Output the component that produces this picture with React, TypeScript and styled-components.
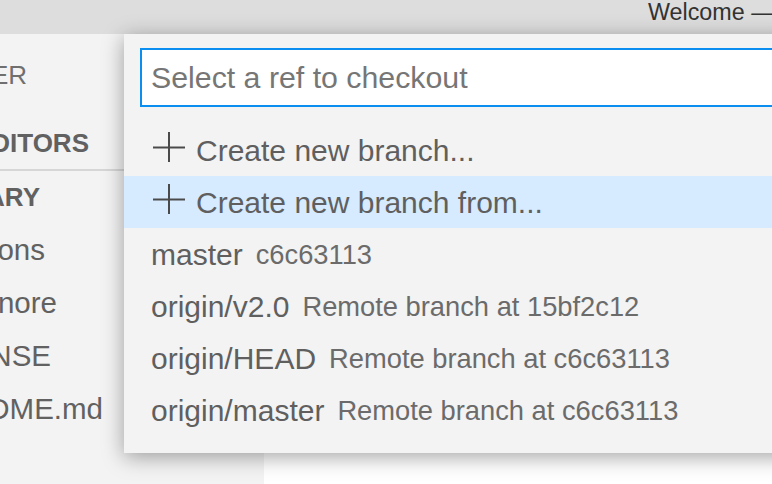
import React from "react";
import styled, { createGlobalStyle } from "styled-components";

const GlobalStyle = createGlobalStyle`
  html, body {
    margin: 0;
    padding: 0;
    width: 772px;
    height: 484px;
    overflow: hidden;
    font-family: "Liberation Sans", Arial, sans-serif;
  }
  * { box-sizing: border-box; }
`;

const Window = styled.div`
  position: relative;
  width: 772px;
  height: 484px;
  display: flex;
  flex-direction: column;
  overflow: hidden;
`;

const TitleBar = styled.div`
  height: 34px;
  flex: none;
  background: #dddddd;
  color: #333333;
  font-size: 23.3px;
  line-height: 24px;
  padding-left: 648px;
  white-space: nowrap;
  overflow: hidden;
`;

const Workbench = styled.div`
  flex: 1;
  display: flex;
  min-height: 0;
`;

const Sidebar = styled.div`
  width: 264px;
  flex: none;
  background: #f3f3f3;
  display: flex;
  flex-direction: column;
  overflow: hidden;
`;

const Editor = styled.div`
  flex: 1;
  background: #ffffff;
`;

/* sidebar rows: the part left of the viewport is cut off, so each row's
   text is aligned to the x at which its visible end sits */
const SideRow = styled.div<{ $h: number; $end: number; $bold?: boolean; $size: number; $color: string }>`
  height: ${(p) => p.$h}px;
  width: ${(p) => p.$end}px;
  display: flex;
  align-items: center;
  justify-content: flex-end;
  white-space: nowrap;
  font-size: ${(p) => p.$size}px;
  font-weight: ${(p) => (p.$bold ? 700 : 400)};
  color: ${(p) => p.$color};
  flex: none;
`;

const Divider = styled.div`
  height: 2px;
  width: 100%;
  background: #d6d6d6;
  flex: none;
`;

const QuickPick = styled.div`
  position: absolute;
  top: 34px;
  left: 124px;
  width: 1200px;
  background: #f3f3f3;
  padding: 14px 0 17px;
  box-shadow: 0 4px 20px rgba(0, 0, 0, 0.36);
  display: flex;
  flex-direction: column;
`;

const InputWrap = styled.div`
  padding: 0 16px;
`;

const Input = styled.input`
  display: block;
  width: 100%;
  height: 59px;
  border: 2px solid #0a8ff0;
  background: #ffffff;
  padding: 0 9px;
  font-family: "Liberation Sans", Arial, sans-serif;
  font-size: 30.3px;
  color: #616161;
  outline: none;
  &::placeholder {
    color: #767676;
  }
`;

const List = styled.div`
  margin-top: 17px;
  display: flex;
  flex-direction: column;
`;

const Row = styled.div<{ $active?: boolean }>`
  height: 52px;
  display: flex;
  align-items: center;
  padding-left: 27px;
  padding-top: 2px;
  background: ${(p) => (p.$active ? "#d6ebff" : "transparent")};
  white-space: nowrap;
`;

const PlusIcon = styled.svg`
  width: 32px;
  height: 36px;
  flex: none;
  margin-left: 2px;
  margin-right: 11px;
  margin-top: -2px;
`;

const Label = styled.span`
  font-size: 30px;
  color: #5f5f5f;
`;

const Description = styled.span`
  font-size: 27.3px;
  color: #6b6b6b;
  margin-left: 13px;
`;

const Plus = () => (
  <PlusIcon viewBox="0 0 32 36">
    <line x1="0" y1="15.5" x2="32" y2="15.5" stroke="#4a4a4a" strokeWidth="2" />
    <line x1="16" y1="0" x2="16" y2="30" stroke="#4a4a4a" strokeWidth="2" />
  </PlusIcon>
);

const refs = [
  { name: "master", desc: "c6c63113" },
  { name: "origin/v2.0", desc: "Remote branch at 15bf2c12" },
  { name: "origin/HEAD", desc: "Remote branch at c6c63113" },
  { name: "origin/master", desc: "Remote branch at c6c63113" },
];

const files = [
  { name: "extensions", end: 45 },
  { name: ".gitignore", end: 57 },
  { name: "LICENSE", end: 51 },
  { name: "README.md", end: 103 },
];

export default function App() {
  return (
    <Window>
      <GlobalStyle />
      <TitleBar>Welcome — vscode-git-library</TitleBar>
      <Workbench>
        <Sidebar>
          <SideRow $h={83} $end={27} $size={26} $color="#6f6f6f">EXPLORER</SideRow>
          <SideRow $h={52} $end={89} $size={26} $bold $color="#616161">OPEN EDITORS</SideRow>
          <Divider />
          <SideRow $h={52} $end={40} $size={26} $bold $color="#616161">VSCODE-GIT-LIBRARY</SideRow>
          {files.map((f) => (
            <SideRow key={f.name} $h={53} $end={f.end} $size={29.5} $color="#616161">
              {f.name}
            </SideRow>
          ))}
        </Sidebar>
        <Editor />
      </Workbench>
      <QuickPick>
        <InputWrap>
          <Input placeholder="Select a ref to checkout" readOnly />
        </InputWrap>
        <List>
          <Row>
            <Plus />
            <Label>Create new branch...</Label>
          </Row>
          <Row $active>
            <Plus />
            <Label>Create new branch from...</Label>
          </Row>
          {refs.map((r) => (
            <Row key={r.name}>
              <Label>{r.name}</Label>
              <Description>{r.desc}</Description>
            </Row>
          ))}
        </List>
      </QuickPick>
    </Window>
  );
}
